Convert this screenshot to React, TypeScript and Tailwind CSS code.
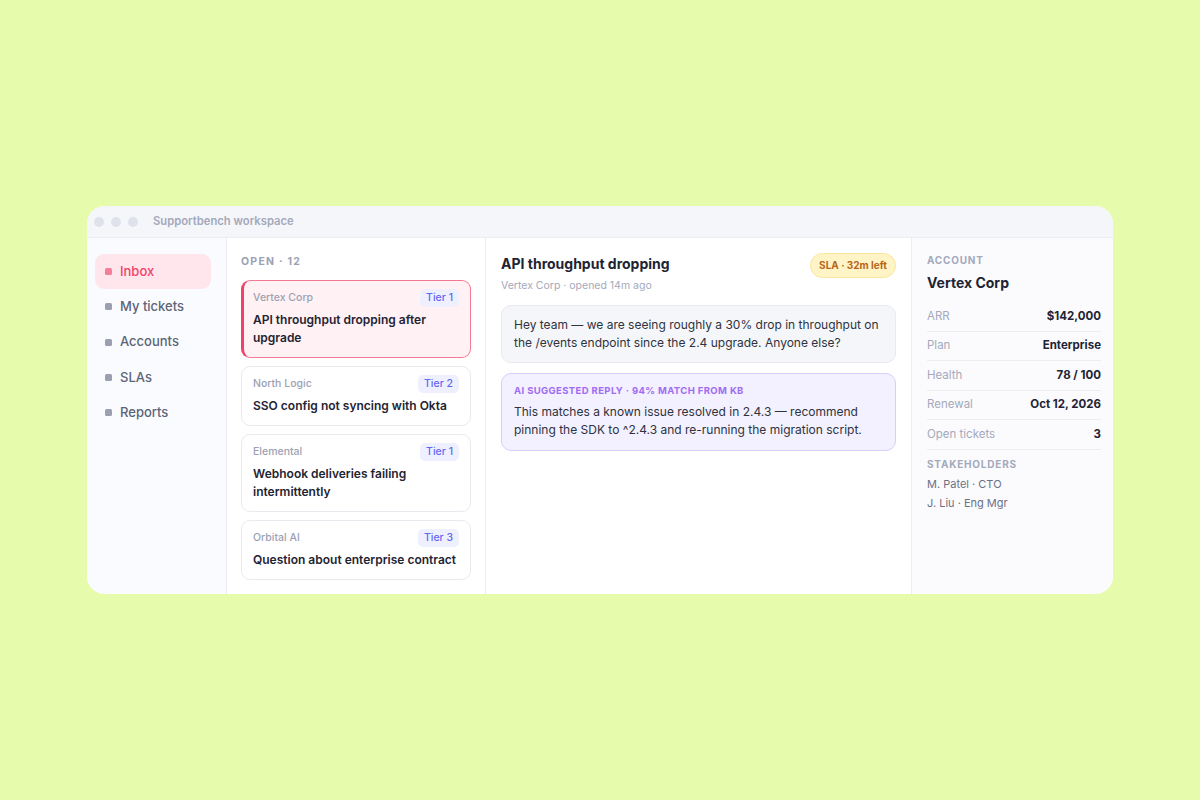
import React from 'react';

const navItems = ['Inbox', 'My tickets', 'Accounts', 'SLAs', 'Reports'];

const tickets = [
  { company: 'Vertex Corp', tier: 'Tier 1', title: 'API throughput dropping after upgrade', active: true },
  { company: 'North Logic', tier: 'Tier 2', title: 'SSO config not syncing with Okta' },
  { company: 'Elemental', tier: 'Tier 1', title: 'Webhook deliveries failing intermittently' },
  { company: 'Orbital AI', tier: 'Tier 3', title: 'Question about enterprise contract' },
];

const accountRows = [
  ['ARR', '$142,000'],
  ['Plan', 'Enterprise'],
  ['Health', '78 / 100'],
  ['Renewal', 'Oct 12, 2026'],
  ['Open tickets', '3'],
];

export default function App() {
  return (
    <div
      className="flex h-screen w-full items-center justify-center bg-[#e6fbab]"
      style={{ fontFamily: 'Inter, "Noto Sans", sans-serif' }}
    >
      <div className="flex h-[388px] w-[1026px] flex-col overflow-hidden rounded-[18px] bg-white">
        {/* title bar */}
        <div className="flex h-[32px] shrink-0 items-center border-b border-[#eceef4] bg-[#f5f6fa] pl-[7px]">
          <div className="flex gap-[7px]">
            <span className="h-[10px] w-[10px] rounded-full bg-[#dfe2ea]" />
            <span className="h-[10px] w-[10px] rounded-full bg-[#dfe2ea]" />
            <span className="h-[10px] w-[10px] rounded-full bg-[#dfe2ea]" />
          </div>
          <span className="ml-[15px] text-[11.25px] font-semibold text-[#a4a9bb]">Supportbench workspace</span>
        </div>

        <div className="flex min-h-0 flex-1">
          {/* sidebar */}
          <div className="w-[140px] shrink-0 border-r border-[#eceef4] bg-[#fafbfe] pt-[16px] pr-[15px] pl-[8px]">
            {navItems.map((item, i) => (
              <div
                key={item}
                className={`flex h-[35.3px] items-center gap-[8px] rounded-[9px] px-[10px] text-[13px] font-medium ${
                  i === 0 ? 'bg-[#ffe6ec] text-[#f0426a]' : 'text-[#5d6477]'
                }`}
              >
                <span className={`h-[7px] w-[7px] rounded-[1.5px] ${i === 0 ? 'bg-[#f57f9b]' : 'bg-[#9aa0b0]'}`} />
                {item}
              </div>
            ))}
          </div>

          {/* ticket list */}
          <div className="w-[259px] shrink-0 border-r border-[#eceef4] px-[14px] pt-[16px]">
            <div className="mb-[10px] text-[10.5px] font-bold tracking-[0.12em] text-[#9ca2b4]">OPEN · 12</div>
            <div className="flex flex-col gap-[8px]">
              {tickets.map((t) => (
                <div
                  key={t.company}
                  className={`rounded-[9px] border px-[11px] pt-[9px] pb-[10px] ${
                    t.active
                      ? 'border-[#f27a96] border-l-[3px] border-l-[#f0426a] bg-[#fff1f4] pl-[9px]'
                      : 'border-[#e8eaf0] bg-white'
                  }`}
                >
                  <div className="mb-[4px] flex h-[17px] items-center justify-between">
                    <span className="text-[10.5px] font-medium text-[#9ca1b3]">{t.company}</span>
                    <span className="rounded-[5px] bg-[#eef0ff] px-[6px] py-[1px] text-[10.5px] font-medium text-[#6366f1]">
                      {t.tier}
                    </span>
                  </div>
                  <div className="text-[12px] leading-[18px] font-semibold text-[#1f2433]">{t.title}</div>
                </div>
              ))}
            </div>
          </div>

          {/* detail */}
          <div className="flex-1 px-[15px] pt-[15px]">
            <div className="flex items-start justify-between">
              <div>
                <div className="text-[14px] leading-[22px] font-bold text-[#1e2433]">API throughput dropping</div>
                <div className="mt-[3px] text-[10.5px] text-[#a4a9bb]">Vertex Corp · opened 14m ago</div>
              </div>
              <span className="rounded-full border border-[#fbe59a] bg-[#fef4c6] px-[8px] py-[4px] text-[10px] font-bold text-[#b8651a]">
                SLA · 32m left
              </span>
            </div>

            <div className="mt-[11px] rounded-[10px] border border-[#e8eaf0] bg-[#f5f6fa] px-[12px] py-[10px] text-[12px] leading-[18px] text-[#2d3340]">
              Hey team — we are seeing roughly a 30% drop in throughput on the /events endpoint since the 2.4 upgrade.
              Anyone else?
            </div>

            <div className="mt-[10px] rounded-[10px] border border-[#d9cdfb] bg-[#f3f0ff] px-[12px] pt-[10px] pb-[11px]">
              <div className="text-[9.5px] font-bold tracking-[0.04em] text-[#9f6cf3]">AI SUGGESTED REPLY · 94% MATCH FROM KB</div>
              <div className="mt-[5px] text-[12px] leading-[18px] text-[#2d3340]">
                This matches a known issue resolved in 2.4.3 — recommend pinning the SDK to ^2.4.3 and re-running the
                migration script.
              </div>
            </div>
          </div>

          {/* account panel */}
          <div className="w-[202px] shrink-0 border-l border-[#eceef4] bg-[#fbfbfe] pt-[15px] pr-[12px] pl-[15px]">
            <div className="text-[10px] font-bold tracking-[0.08em] text-[#a4a9bb]">ACCOUNT</div>
            <div className="mt-[4px] text-[14px] font-bold text-[#1e2433]">Vertex Corp</div>
            <div className="mt-[9px]">
              {accountRows.map(([k, v]) => (
                <div key={k} className="flex h-[29.5px] items-center justify-between border-b border-[#eceef3]">
                  <span className="text-[11.5px] text-[#a4a9bb]">{k}</span>
                  <span className="text-[11.5px] font-bold text-[#1e2433]">{v}</span>
                </div>
              ))}
            </div>
            <div className="mt-[7px] text-[10px] font-bold tracking-[0.08em] text-[#a4a9bb]">STAKEHOLDERS</div>
            <div className="mt-[3px] text-[11px] leading-[19px] text-[#6b7184]">
              <div>M. Patel · CTO</div>
              <div>J. Liu · Eng Mgr</div>
            </div>
          </div>
        </div>
      </div>
    </div>
  );
}
